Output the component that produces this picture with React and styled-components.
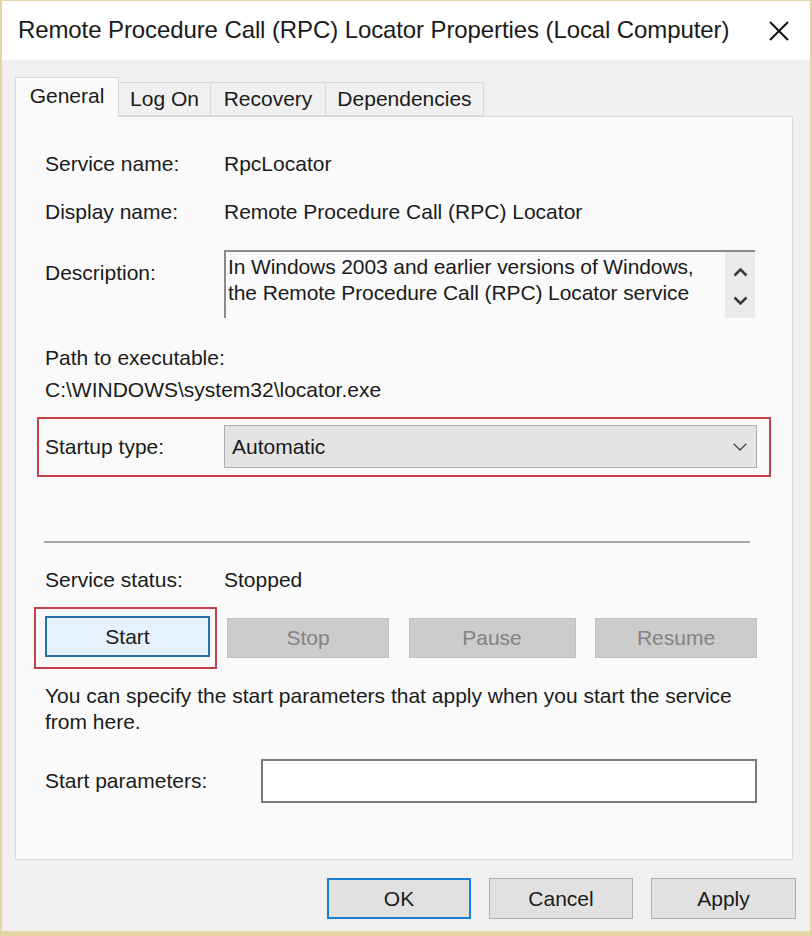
import React from "react";
import styled, { createGlobalStyle } from "styled-components";

const GlobalStyle = createGlobalStyle`
  html, body {
    margin: 0;
    padding: 0;
    background: #f0f0f0;
  }
  body {
    font-family: "Liberation Sans", Arial, sans-serif;
    color: #1a1a1a;
  }
`;

const Window = styled.div`
  width: 812px;
  height: 936px;
  box-sizing: border-box;
  border: 2px solid #e3d6a6;
  border-top-width: 1px;
  border-bottom-width: 5px;
  background: #f0f0f0;
  display: flex;
  flex-direction: column;
`;

const TitleBar = styled.div`
  height: 59px;
  background: #ffffff;
  display: flex;
  align-items: center;
  justify-content: space-between;
  padding: 0 20px 0 16px;
`;

const Title = styled.div`
  font-size: 24px;
  letter-spacing: -0.1px;
  color: #1a1a1a;
  padding-bottom: 2px;
`;

const Body = styled.div`
  flex: 1;
  padding: 17px 14px 0 13px;
  display: flex;
  flex-direction: column;
`;

const TabStrip = styled.div`
  display: flex;
  align-items: flex-end;
  height: 39px;
  position: relative;
  z-index: 1;
`;

const Tab = styled.div`
  box-sizing: border-box;
  height: ${(p) => (p.$active ? "40px" : "34px")};
  margin-bottom: ${(p) => (p.$active ? "-1px" : "0")};
  background: ${(p) => (p.$active ? "#fafafa" : "#f0f0f0")};
  border: 1px solid #d9d9d9;
  border-bottom: ${(p) => (p.$active ? "none" : "1px solid #d9d9d9")};
  border-left: ${(p) => (p.$first || p.$active ? "1px solid #d9d9d9" : "none")};
  font-size: 21px;
  display: flex;
  align-items: center;
  padding-bottom: ${(p) => (p.$active ? "4px" : "0")};
  width: ${(p) => p.$w}px;
  justify-content: center;
  white-space: nowrap;
`;

const Panel = styled.div`
  box-sizing: border-box;
  width: 778px;
  height: 744px;
  background: #fafafa;
  border: 1px solid #d9d9d9;
  padding: 34px 35px 0 29px;
  font-size: 21px;
`;

const Field = styled.div`
  display: grid;
  grid-template-columns: ${(p) => p.$label || 179}px 1fr;
  align-items: ${(p) => (p.$top ? "start" : "center")};
  line-height: 26px;
  margin-top: ${(p) => p.$mt || 0}px;
`;

const Label = styled.div`
  padding-top: ${(p) => p.$pt || 0}px;
`;

const Text = styled.div`
  line-height: 26px;
  margin-top: ${(p) => p.$mt || 0}px;
`;

const DescBox = styled.div`
  height: 68px;
  box-sizing: border-box;
  border-top: 2px solid #8a8a8a;
  border-left: 2px solid #8a8a8a;
  display: flex;
  width: 531px;
`;

const DescText = styled.div`
  flex: 1;
  padding: 2px 0 0 2px;
  line-height: 26px;
  letter-spacing: -0.1px;
  white-space: nowrap;
  overflow: hidden;
`;

const ScrollBar = styled.div`
  width: 30px;
  background: #ebebeb;
  display: flex;
  flex-direction: column;
  align-items: center;
  justify-content: space-around;
  padding: 6px 0 4px;
`;

const Highlight = styled.div`
  border: 2px solid #c4414b;
  margin: ${(p) => p.$m};
  padding: ${(p) => p.$p};
`;

const Combo = styled.div`
  height: 43px;
  box-sizing: border-box;
  background: #e4e4e4;
  border: 1px solid #acacac;
  display: flex;
  align-items: center;
  justify-content: space-between;
  padding: 0 8px 0 7px;
  font-size: 21px;
`;

const Separator = styled.div`
  height: 2px;
  background: #a8a8a8;
  margin: 64px 7px 0 -1px;
`;

const ButtonRow = styled.div`
  display: flex;
  align-items: center;
  margin-top: 14px;
  margin-left: -11px;
`;

const DisabledGroup = styled.div`
  flex: 1;
  display: flex;
  justify-content: space-between;
  margin-left: 10px;
`;

const Button = styled.div`
  box-sizing: border-box;
  width: ${(p) => p.$w}px;
  height: ${(p) => p.$h || 41}px;
  display: flex;
  align-items: center;
  justify-content: center;
  font-size: 21px;
  background: ${(p) => (p.$variant === "focus" ? "#e5f1fb" : p.$variant === "disabled" ? "#cccccc" : "#e1e1e1")};
  border: ${(p) =>
    p.$variant === "focus"
      ? "2px solid #2a6ea6"
      : p.$variant === "default"
      ? "2px solid #1a7fd4"
      : p.$variant === "disabled"
      ? "1px solid #bfbfbf"
      : "1px solid #adadad"};
  color: ${(p) => (p.$variant === "disabled" ? "#838383" : "#1a1a1a")};
`;

const Input = styled.div`
  height: 44px;
  box-sizing: border-box;
  background: #ffffff;
  border: 2px solid #7a7a7a;
`;

const Footer = styled.div`
  display: flex;
  justify-content: flex-end;
  gap: 18px;
  margin-top: 18px;
`;

const Chevron = ({ up, size = 18 }) => (
  <svg width={size} height={size * 0.6} viewBox="0 0 20 12" fill="none">
    <path
      d={up ? "M2 10 L10 2 L18 10" : "M2 2 L10 10 L18 2"}
      stroke="#3a3a3a"
      strokeWidth={up !== undefined ? 3.4 : 1.6}
    />
  </svg>
);

const CloseIcon = () => (
  <svg width="22" height="22" viewBox="0 0 22 22">
    <path d="M2 2 L20 20 M20 2 L2 20" stroke="#111" strokeWidth="2" />
  </svg>
);

export default function App() {
  return (
    <>
      <GlobalStyle />
      <Window>
        <TitleBar>
          <Title>Remote Procedure Call (RPC) Locator Properties (Local Computer)</Title>
          <CloseIcon />
        </TitleBar>
        <Body>
          <TabStrip>
            <Tab $active $first $w={104}>General</Tab>
            <Tab $w={92}>Log On</Tab>
            <Tab $w={115}>Recovery</Tab>
            <Tab $w={158}>Dependencies</Tab>
          </TabStrip>
          <Panel>
            <Field>
              <Label>Service name:</Label>
              <div>RpcLocator</div>
            </Field>
            <Field $mt={22}>
              <Label>Display name:</Label>
              <div>Remote Procedure Call (RPC) Locator</div>
            </Field>
            <Field $mt={25} $top>
              <Label $pt={10}>Description:</Label>
              <DescBox>
                <DescText>
                  In Windows 2003 and earlier versions of Windows,
                  <br />
                  the Remote Procedure Call (RPC) Locator service
                </DescText>
                <ScrollBar>
                  <Chevron up size={15} />
                  <Chevron up={false} size={15} />
                </ScrollBar>
              </DescBox>
            </Field>
            <Text $mt={27}>Path to executable:</Text>
            <Text $mt={6}>C:\WINDOWS\system32\locator.exe</Text>
            <Highlight $m="14px -14px 0 -8px" $p="6px 12px 7px 6px">
              <Field>
                <Label>Startup type:</Label>
                <Combo>
                  Automatic
                  <Chevron size={16} />
                </Combo>
              </Field>
            </Highlight>
            <Separator />
            <Field $mt={24}>
              <Label>Service status:</Label>
              <div>Stopped</div>
            </Field>
            <ButtonRow>
              <Highlight $m="0" $p="7px 5px 10px 9px">
                <Button $variant="focus" $w={165}>Start</Button>
              </Highlight>
              <DisabledGroup>
                <Button $variant="disabled" $w={162} $h={40}>Stop</Button>
                <Button $variant="disabled" $w={167} $h={40}>Pause</Button>
                <Button $variant="disabled" $w={162} $h={40}>Resume</Button>
              </DisabledGroup>
            </ButtonRow>
            <Text $mt={14}>
              You can specify the start parameters that apply when you start the service
              <br />
              from here.
            </Text>
            <Field $mt={24} $label={216}>
              <Label>Start parameters:</Label>
              <Input />
            </Field>
          </Panel>
          <Footer>
            <Button $variant="default" $w={144}>OK</Button>
            <Button $w={144}>Cancel</Button>
            <Button $w={145}>Apply</Button>
          </Footer>
        </Body>
      </Window>
    </>
  );
}
